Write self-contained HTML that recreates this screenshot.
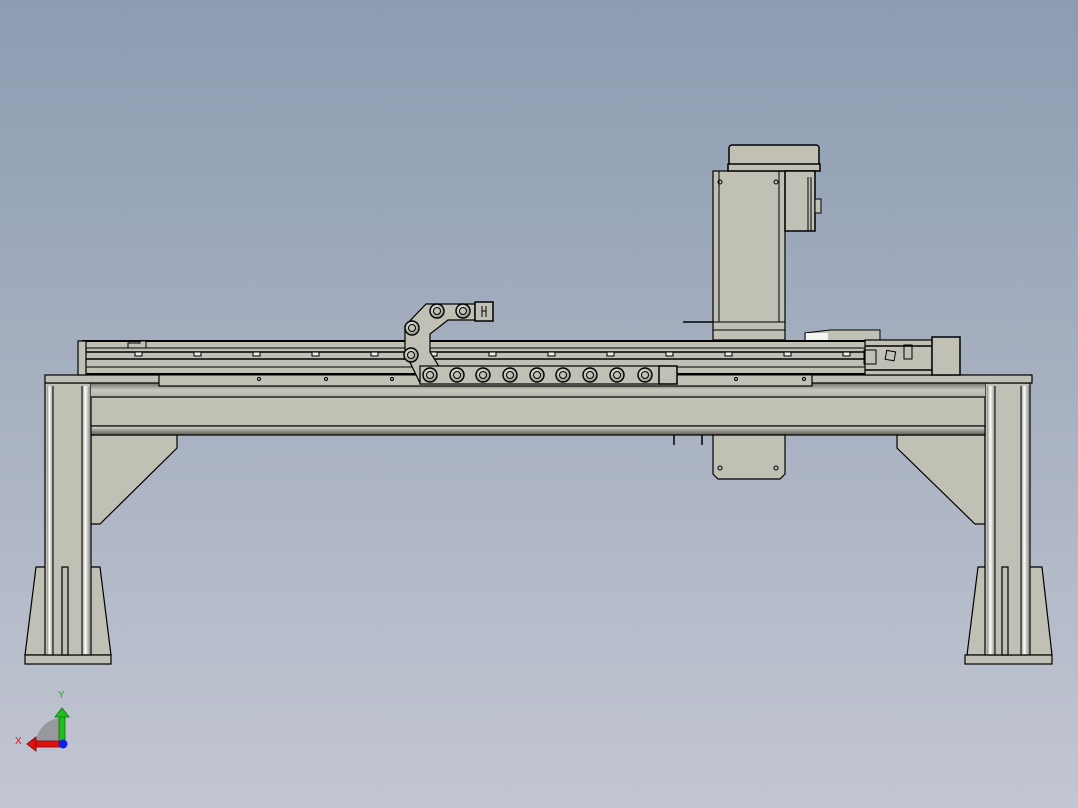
<!DOCTYPE html>
<html><head><meta charset="utf-8"><style>
html,body{margin:0;padding:0;width:1078px;height:808px;overflow:hidden}
body{background:linear-gradient(#8c9cb1,#c3c6d2)}
svg{position:absolute;left:0;top:0}
</style></head><body>
<svg width="1078" height="808" viewBox="0 0 1078 808" xmlns="http://www.w3.org/2000/svg">
<defs>
<linearGradient id="beamShade" x1="0" y1="0" x2="0" y2="1">
<stop offset="0" stop-color="#e2e2da"/><stop offset="0.5" stop-color="#9a9a90"/><stop offset="1" stop-color="#5d5d55"/></linearGradient>
<linearGradient id="beamTop" x1="0" y1="0" x2="0" y2="1">
<stop offset="0" stop-color="#6f6f66"/><stop offset="0.5" stop-color="#c8c8be"/><stop offset="1" stop-color="#b0b0a6"/></linearGradient>
<linearGradient id="legShade" x1="0" y1="0" x2="1" y2="0">
<stop offset="0" stop-color="#8f8f86"/><stop offset="0.4" stop-color="#ffffff"/><stop offset="1" stop-color="#8f8f86"/></linearGradient>
<radialGradient id="ball" cx="0.4" cy="0.35" r="0.6"><stop offset="0" stop-color="#eeeee6"/><stop offset="1" stop-color="#9c9c92"/></radialGradient>
</defs>
<g stroke="#000" stroke-width="1.2" fill="#c0c0b5">
<polygon points="91,435 177,435 177,448 100,524 91,524"/>
<polygon points="985,435 897,435 897,448 975,524 985,524"/>
<polygon points="36,567 100,567 111,655 25,655"/>
<rect x="25" y="655" width="86" height="9"/>
<polygon points="978,567 1042,567 1052,655 967,655"/>
<rect x="965" y="655" width="87" height="9"/>
<rect x="45" y="383" width="46" height="272"/>
<rect x="985" y="383" width="45" height="272"/>
<rect x="62" y="567" width="6" height="88" fill="none"/>
<rect x="1002" y="567" width="6" height="88" fill="none"/>
</g>
<rect x="47" y="386" width="6" height="268" fill="url(#legShade)"/>
<rect x="82" y="386" width="8" height="268" fill="url(#legShade)"/>
<rect x="987" y="386" width="8" height="268" fill="url(#legShade)"/>
<rect x="1021" y="386" width="8" height="268" fill="url(#legShade)"/>
<g stroke="#000" stroke-width="1" fill="none">
<line x1="53" y1="386" x2="53" y2="655"/><line x1="82" y1="386" x2="82" y2="655"/>
<line x1="995" y1="386" x2="995" y2="655"/><line x1="1021" y1="386" x2="1021" y2="655"/>
</g>
<!-- beam -->
<rect x="91" y="383" width="894" height="14" fill="url(#beamTop)"/>
<rect x="91" y="397" width="894" height="29" fill="#c0c0b5" stroke="#000" stroke-width="1.2"/>
<rect x="91" y="426" width="894" height="9" fill="url(#beamShade)" stroke="#000" stroke-width="1.2"/>
<path d="M713,435 H785 V474 L780,479 H718 L713,474 Z" fill="#c0c0b5" stroke="#000" stroke-width="1.2"/>
<circle cx="720" cy="468" r="2" fill="none" stroke="#000"/><circle cx="776" cy="468" r="2" fill="none" stroke="#000"/>
<path d="M674,435 v10 M702,435 v10" stroke="#000" stroke-width="1.5"/>
<rect x="45" y="375" width="987" height="8" fill="#c0c0b5" stroke="#000" stroke-width="1.2"/>
<rect x="159" y="374" width="653" height="12" fill="#c0c0b5" stroke="#000" stroke-width="1.2"/>
<g fill="none" stroke="#000"><circle cx="259" cy="379" r="1.5"/><circle cx="326" cy="379" r="1.5"/><circle cx="392" cy="379" r="1.5"/><circle cx="736" cy="379" r="1.5"/><circle cx="804" cy="379" r="1.5"/></g>
<rect x="82" y="341" width="783" height="34" fill="#c0c0b5" stroke="#000"/>
<g stroke="#000">
<line x1="82" y1="341" x2="865" y2="341" stroke-width="2"/>
<line x1="82" y1="348" x2="865" y2="348"/>
<line x1="82" y1="352" x2="865" y2="352" stroke-width="1.5"/>
<line x1="82" y1="359" x2="865" y2="359" stroke-width="1.5"/>
<line x1="82" y1="367" x2="865" y2="367"/>
<line x1="82" y1="374" x2="865" y2="374" stroke-width="2"/>
</g>
<rect x="78" y="341" width="8" height="34" fill="#c0c0b5" stroke="#000" stroke-width="1.2"/>
<path d="M128,343 h12 v-2 h6 v7 h-18z" fill="#c0c0b5" stroke="#000"/>
<g fill="#eeeee6" stroke="#000">
<rect x="135" y="352" width="7" height="4"/><rect x="194" y="352" width="7" height="4"/><rect x="253" y="352" width="7" height="4"/><rect x="312" y="352" width="7" height="4"/><rect x="371" y="352" width="7" height="4"/><rect x="430" y="352" width="7" height="4"/><rect x="489" y="352" width="7" height="4"/><rect x="548" y="352" width="7" height="4"/><rect x="607" y="352" width="7" height="4"/><rect x="666" y="352" width="7" height="4"/><rect x="725" y="352" width="7" height="4"/><rect x="784" y="352" width="7" height="4"/><rect x="843" y="352" width="7" height="4"/>
</g>
<path d="M805,340 V333 L830,330 H880 V340" fill="#c0c0b5" stroke="#000"/>
<rect x="806" y="333" width="22" height="7" fill="#f4f4f0" stroke="none"/>
<rect x="865" y="340" width="67" height="35" fill="#c0c0b5" stroke="#000" stroke-width="1.2"/>
<line x1="865" y1="346" x2="932" y2="346" stroke="#000" stroke-width="1.5"/>
<line x1="865" y1="370" x2="932" y2="370" stroke="#000" stroke-width="1.5"/>
<rect x="932" y="337" width="28" height="38" fill="#c0c0b5" stroke="#000" stroke-width="1.5"/>
<rect x="904" y="345" width="8" height="14" fill="none" stroke="#000"/>
<rect x="864" y="350" width="12" height="14" fill="none" stroke="#000"/>
<rect x="886" y="351" width="9" height="9" fill="none" stroke="#000" transform="rotate(10 890 355)"/>
<rect x="713" y="171" width="72" height="169" fill="#c0c0b5" stroke="#000" stroke-width="1.2"/>
<g stroke="#000"><line x1="719" y1="171" x2="719" y2="322"/><line x1="779" y1="171" x2="779" y2="322"/>
<line x1="713" y1="322" x2="785" y2="322"/><line x1="713" y1="330" x2="785" y2="330"/>
<line x1="683" y1="322" x2="713" y2="322" stroke-width="1.5"/></g>
<circle cx="720" cy="182" r="2" fill="none" stroke="#000"/><circle cx="776" cy="182" r="2" fill="none" stroke="#000"/>
<rect x="729" y="145" width="90" height="20" rx="3" fill="#c0c0b5" stroke="#000" stroke-width="1.5"/>
<rect x="728" y="164" width="92" height="7" fill="#c0c0b5" stroke="#000" stroke-width="1.5"/>
<rect x="785" y="171" width="30" height="60" fill="#c0c0b5" stroke="#000" stroke-width="1.5"/>
<line x1="808" y1="177" x2="808" y2="231" stroke="#000"/><line x1="811" y1="177" x2="811" y2="231" stroke="#000"/>
<rect x="815" y="199" width="6" height="14" fill="#c0c0b5" stroke="#000"/>
<path d="M405,352 V326 L426,304 H475 V320 H448 L430,334 V352 L440,368 V383 H420 Z" fill="#c0c0b5" stroke="#000" stroke-width="1.2"/>
<rect x="420" y="366" width="242" height="18" fill="#c0c0b5" stroke="#000" stroke-width="1.2"/>
<rect x="475" y="302" width="18" height="19" fill="#c0c0b5" stroke="#000" stroke-width="1.5"/>
<path d="M482,306 v11 M486,306 v11 M482,311 h4" stroke="#000"/>
<rect x="659" y="366" width="18" height="18" fill="#c0c0b5" stroke="#000" stroke-width="1.5"/>
<g fill="url(#ball)" stroke="#000" stroke-width="1.4">
<circle cx="437" cy="311" r="7"/><circle cx="463" cy="311" r="7"/>
<circle cx="412" cy="328" r="7"/><circle cx="411" cy="355" r="7"/>
<circle cx="430" cy="375" r="7"/><circle cx="457" cy="375" r="7"/><circle cx="483" cy="375" r="7"/><circle cx="510" cy="375" r="7"/><circle cx="537" cy="375" r="7"/><circle cx="563" cy="375" r="7"/><circle cx="590" cy="375" r="7"/><circle cx="617" cy="375" r="7"/><circle cx="645" cy="375" r="7"/>
</g>
<g fill="#c0c0b5" stroke="#000" stroke-width="1">
<circle cx="437" cy="311" r="3.5"/><circle cx="463" cy="311" r="3.5"/><circle cx="412" cy="328" r="3.5"/><circle cx="411" cy="355" r="3.5"/>
<circle cx="430" cy="375" r="3.5"/><circle cx="457" cy="375" r="3.5"/><circle cx="483" cy="375" r="3.5"/><circle cx="510" cy="375" r="3.5"/><circle cx="537" cy="375" r="3.5"/><circle cx="563" cy="375" r="3.5"/><circle cx="590" cy="375" r="3.5"/><circle cx="617" cy="375" r="3.5"/><circle cx="645" cy="375" r="3.5"/>
</g>
<path d="M62,744 L36,744 A26,26 0 0 1 62,718 Z" fill="#8e8e8e" opacity="0.8"/>
<rect x="59" y="716" width="6" height="28" fill="#20c020" stroke="#0a700a" stroke-width="0.8"/>
<polygon points="55,717 62,708 69,717" fill="#20c020" stroke="#0a700a" stroke-width="0.8"/>
<rect x="35" y="741" width="27" height="6" fill="#e01010" stroke="#800" stroke-width="0.8"/>
<polygon points="36,737 27,744 36,751" fill="#e01010" stroke="#800" stroke-width="0.8"/>
<circle cx="63" cy="744" r="4.5" fill="#1020e0"/>
<text x="58" y="698" font-family="Liberation Sans, sans-serif" font-size="10" fill="#20b020">Y</text>
<text x="15" y="744" font-family="Liberation Sans, sans-serif" font-size="10" fill="#e01010">X</text>
</svg>
</body></html>
